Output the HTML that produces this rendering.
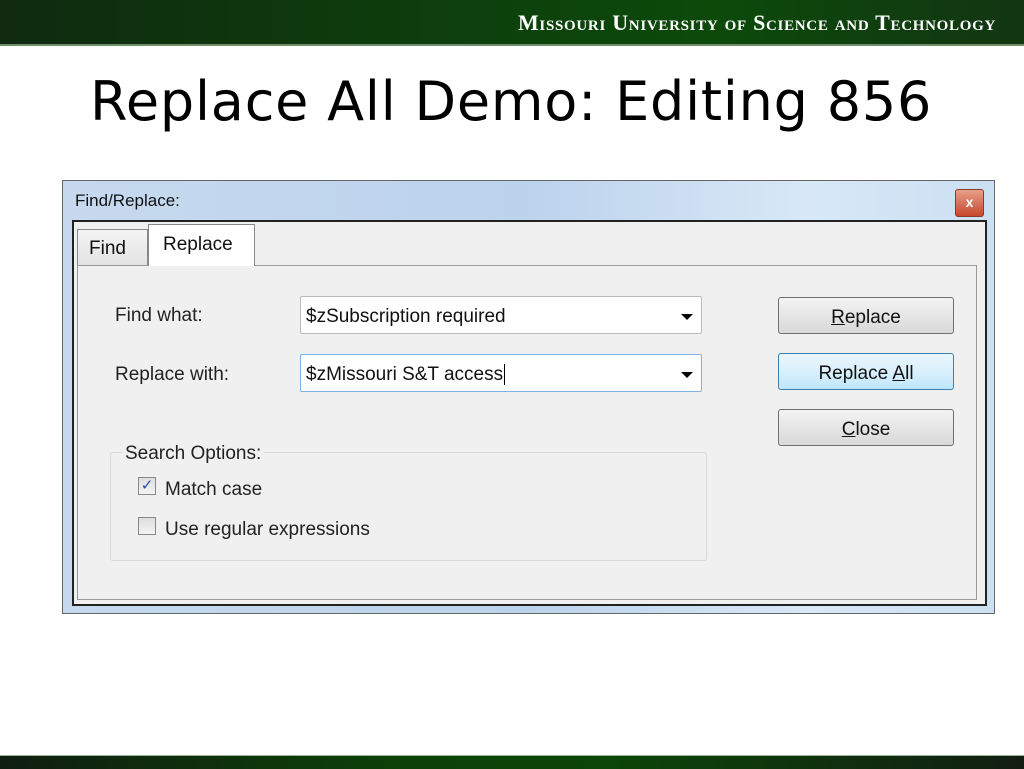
<!DOCTYPE html><html><head><style>
body{margin:0;width:1024px;height:768px;position:relative;background:#fff;font-family:"Liberation Sans",Arial,sans-serif;overflow:hidden}
.a{position:absolute}
.top{left:0;top:0;width:1024px;height:44px;background:linear-gradient(90deg,#0f2a10,#0d3d0c 40%,#0c4a0a 70%,#123512);border-bottom:2px solid #6f8f6a}
.brand{right:28px;top:10px;color:#fff;font-family:"Liberation Serif",serif;font-weight:bold;font-size:22px;font-variant:small-caps;white-space:nowrap;letter-spacing:0.7px}
.bot{left:0;top:755px;width:1024px;height:13px;background:linear-gradient(90deg,#101e10,#0c4208 40%,#0c4508 60%,#121e12);border-top:1px solid #9bb29a}
h1{position:absolute;left:90px;top:70px;margin:0;font-family:"DejaVu Sans",sans-serif;font-weight:normal;font-size:54px;color:#000;letter-spacing:0.8px}
.dlg{left:62px;top:180px;width:931px;height:432px;border:1px solid #666;background:linear-gradient(90deg,#c6d9ee,#bcd3ec 50%,#d8e8f7 80%,#cbe0f2)}
.title{left:75px;top:191px;font-size:17px;color:#111}
.x{left:955px;top:189px;width:27px;height:26px;border:1px solid #8a3a2a;border-radius:3px;background:linear-gradient(#e8a08a,#c8462e);color:#fff;font-size:14px;font-weight:bold;text-align:center;line-height:25px}
.inner{left:72px;top:220px;width:911px;height:382px;border:2px solid #222;background:#f0f0f0}
.tab{font-size:19px;color:#111;border:1px solid #888;border-bottom:none}
.panel{left:77px;top:265px;width:898px;height:333px;border:1px solid #999;background:#f0f0f0}
.lbl{font-size:19px;color:#222}
.cb{width:402px;height:38px;border:1px solid #bbb;background:#fff;font-size:19px;color:#111;box-sizing:border-box;padding:9px 5px 0;border-radius:2px}
.arr{position:absolute;right:8px;top:17px;width:0;height:0;border-left:6px solid transparent;border-right:6px solid transparent;border-top:6px solid #000}
.btn{width:176px;height:37px;border:1px solid #707070;border-radius:3px;background:linear-gradient(#f3f3f3,#e6e6e6 50%,#d8d8d8);font-size:19px;text-align:center;line-height:39px;color:#111;box-sizing:border-box}
.grp{left:110px;top:452px;width:595px;height:107px;border:1px solid #d8d8d8;border-radius:3px}
.chk{width:18px;height:18px;border:1px solid #888;background:linear-gradient(#ddd,#f4f4f4);box-sizing:border-box;font-size:15px;line-height:16px;text-align:center;color:#2a4ca8}
</style></head><body>
<div class="a top"></div><div class="a brand">Missouri University of Science and Technology</div>
<h1>Replace All Demo: Editing 856</h1>
<div class="a dlg"></div>
<div class="a title">Find/Replace:</div>
<div class="a x">x</div>
<div class="a inner"></div>
<div class="a panel"></div>
<div class="a tab" style="left:77px;top:229px;width:71px;height:36px;background:linear-gradient(#f4f4f4,#e3e3e3);box-sizing:border-box;padding:8px 0 0 11px">Find</div>
<div class="a tab" style="left:148px;top:224px;width:107px;height:42px;background:#fff;box-sizing:border-box;padding:9px 0 0 14px">Replace</div>
<div class="a lbl" style="left:115px;top:305px">Find what:</div>
<div class="a lbl" style="left:115px;top:364px">Replace with:</div>
<div class="a cb" style="left:300px;top:296px">$zSubscription required<span class="arr"></span></div>
<div class="a cb" style="left:300px;top:354px;border-color:#7eb4ea">$zMissouri S&amp;T access<span style="border-left:1px solid #000;margin-left:1px"></span><span class="arr"></span></div>
<div class="a btn" style="left:778px;top:297px"><u>R</u>eplace</div>
<div class="a btn" style="left:778px;top:353px;border-color:#3c7fb1;background:linear-gradient(#eaf6fd,#d9f0fc 50%,#bee6fd)">Replace <u>A</u>ll</div>
<div class="a btn" style="left:778px;top:409px"><u>C</u>lose</div>
<div class="a grp"></div>
<div class="a lbl" style="left:122px;top:443px;background:#f0f0f0;padding:0 3px">Search Options:</div>
<div class="a chk" style="left:138px;top:477px">✓</div>
<div class="a lbl" style="left:165px;top:479px">Match case</div>
<div class="a chk" style="left:138px;top:517px"></div>
<div class="a lbl" style="left:165px;top:519px">Use regular expressions</div>
<div class="a bot"></div>
</body></html>
